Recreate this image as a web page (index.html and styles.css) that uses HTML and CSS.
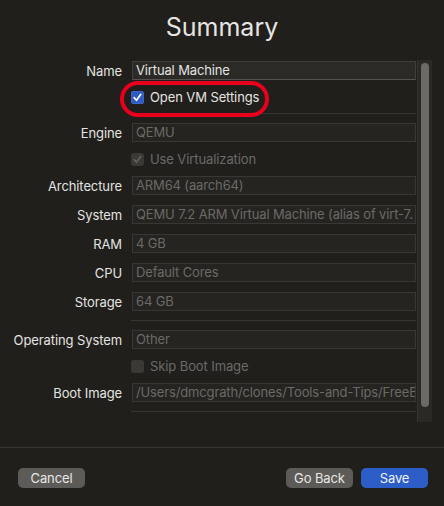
FILE: index.html
```html
<!DOCTYPE html>
<html>
<head>
<meta charset="utf-8">
<link rel="stylesheet" href="styles.css">
</head>
<body>
<div class="window">
  <h1 class="title">Summary</h1>
  <div class="content">
    <div class="form">
      <div class="row">
        <div class="label">Name</div>
        <div class="field editable">Virtual Machine</div>
      </div>
      <div class="row chkrow">
        <div class="label"></div>
        <div class="check-line">
          <span class="box checked"><svg viewBox="0 0 14 14" width="13" height="13"><path d="M3.3 7.2 L5.9 10 L10.6 3.6" fill="none" stroke="#fff" stroke-width="1.8" stroke-linecap="round" stroke-linejoin="round"/></svg></span>
          <span class="ctext bright">Open VM Settings</span>
        </div>
      </div>
      <div class="sep"></div>
      <div class="row">
        <div class="label">Engine</div>
        <div class="field">QEMU</div>
      </div>
      <div class="row chkrow">
        <div class="label"></div>
        <div class="check-line">
          <span class="box disabled"><svg viewBox="0 0 14 14" width="13" height="13"><path d="M3.3 7.2 L5.9 10 L10.6 3.6" fill="none" stroke="#62615d" stroke-width="1.8" stroke-linecap="round" stroke-linejoin="round"/></svg></span>
          <span class="ctext">Use Virtualization</span>
        </div>
      </div>
      <div class="row">
        <div class="label">Architecture</div>
        <div class="field">ARM64 (aarch64)</div>
      </div>
      <div class="row">
        <div class="label">System</div>
        <div class="field">QEMU 7.2 ARM Virtual Machine (alias of virt-7.</div>
      </div>
      <div class="row">
        <div class="label">RAM</div>
        <div class="field">4 GB</div>
      </div>
      <div class="row">
        <div class="label">CPU</div>
        <div class="field">Default Cores</div>
      </div>
      <div class="row">
        <div class="label">Storage</div>
        <div class="field">64 GB</div>
      </div>
      <div class="sep"></div>
      <div class="row">
        <div class="label">Operating System</div>
        <div class="field">Other</div>
      </div>
      <div class="row chkrow">
        <div class="label"></div>
        <div class="check-line">
          <span class="box disabled"></span>
          <span class="ctext">Skip Boot Image</span>
        </div>
      </div>
      <div class="row">
        <div class="label">Boot Image</div>
        <div class="field">/Users/dmcgrath/clones/Tools-and-Tips/FreeB</div>
      </div>
      <div class="sep"></div>
      <div class="row chkrow">
        <div class="label"></div>
        <div class="check-line">
          <span class="box disabled"></span>
        </div>
      </div>
    </div>
    <div class="scrollbar"><div class="thumb"></div></div>
    <div class="highlight"></div>
  </div>
  <div class="footer">
    <button class="btn">Cancel</button>
    <div class="spacer"></div>
    <button class="btn">Go Back</button>
    <button class="btn primary">Save</button>
  </div>
</div>
</body>
</html>
```
FILE: styles.css
```css
* { box-sizing: border-box; }
html, body {
  margin: 0;
  padding: 0;
  background: #201f1c;
}
body {
  font-family: Inter, "Noto Sans", "Liberation Sans", sans-serif;
  color: #e2e1de;
  width: 444px;
  height: 506px;
  overflow: hidden;
}
.window {
  width: 444px;
  height: 506px;
  display: flex;
  flex-direction: column;
}
.title {
  margin: 0;
  height: 60px;
  padding-top: 12px;
  text-align: center;
  font-size: 25px;
  font-weight: 400;
  line-height: 30px;
  color: #e6e5e2;
}
.content {
  position: relative;
  height: 362px;
  display: flex;
  margin-right: 12px;
}
.form {
  flex: 1;
  overflow: hidden;
  padding-top: 1px;
  display: flex;
  flex-direction: column;
  gap: 10px;
}
.row {
  display: flex;
  align-items: center;
  height: 19px;
  flex-shrink: 0;
}
.row.chkrow { height: 14px; }
.label {
  width: 122px;
  flex-shrink: 0;
  text-align: right;
  font-size: 13px;
  letter-spacing: -0.1px;
  color: #e4e3e0;
  margin-right: 10px;
  white-space: nowrap;
}
.field {
  width: 284px;
  height: 19px;
  background: #252420;
  border: 1px solid #383733;
  font-size: 13px;
  letter-spacing: -0.14px;
  line-height: 17px;
  padding-left: 3px;
  color: #6b6a66;
  white-space: nowrap;
  overflow: hidden;
}
.field.editable {
  background: #2b2a27;
  border-color: #3f3e3a;
  border-bottom-color: #55544f;
  color: #e4e3e0;
}
.check-line {
  display: flex;
  align-items: center;
  margin-left: -1px;
}
.box {
  width: 13px;
  height: 13px;
  border-radius: 3px;
  display: inline-flex;
  align-items: center;
  justify-content: center;
  margin-right: 6px;
}
.box svg { display: block; }
.box.checked {
  background: #2f5cc4;
  box-shadow: inset 0 0 0 0.5px #4a72d0;
}
.box.disabled {
  background: #3a3935;
}
.ctext {
  font-size: 13px;
  letter-spacing: -0.1px;
  color: #6b6a66;
}
.ctext.bright { color: #e4e3e0; }
.sep {
  height: 1px;
  background: #363531;
  margin: -1px 0 -1px 131px;
  flex-shrink: 0;
}
.scrollbar {
  width: 15px;
  flex-shrink: 0;
  background: #2a2926;
  border-left: 1px solid #35342f;
  padding: 3px 3px 0 3px;
  margin-left: 1px;
}
.thumb {
  width: 8px;
  height: 344px;
  border-radius: 4px;
  background: #6b6a66;
}
.highlight {
  position: absolute;
  left: 120px;
  top: 21px;
  width: 149px;
  height: 36px;
  border: 4px solid #e8001c;
  border-radius: 18px;
}
.footer {
  margin-top: 25px;
  border-top: 1px solid #363531;
  display: flex;
  align-items: flex-start;
  padding: 20px 16px 0 18px;
  gap: 8px;
}
.spacer { flex: 1; }
.btn {
  width: 67px;
  height: 20px;
  border: none;
  border-radius: 5px;
  background: #5c5b58;
  color: #e8e7e4;
  font-family: Inter, "Noto Sans", "Liberation Sans", sans-serif;
  font-size: 13px;
  letter-spacing: -0.1px;
  padding: 0;
  line-height: 20px;
}
.btn.primary {
  background: #2d5dc6;
  color: #f2f2f2;
}
```
